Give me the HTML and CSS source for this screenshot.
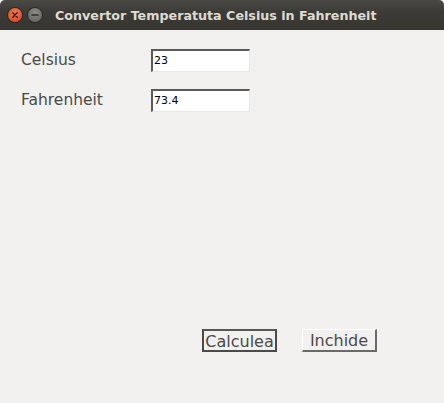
FILE: index.html
```html
<!DOCTYPE html>
<html>
<head>
<meta charset="utf-8">
<link rel="stylesheet" href="styles.css">
</head>
<body>
<div class="window">
  <div class="titlebar">
    <div class="controls">
      <span class="btn-close">
        <svg width="14" height="14" viewBox="0 0 14 14"><path d="M4.8 4.8 L9.2 9.2 M9.2 4.8 L4.8 9.2" stroke="#3a1a10" stroke-width="1.4" stroke-linecap="round"/></svg>
      </span>
      <span class="btn-min">
        <svg width="14" height="14" viewBox="0 0 14 14"><path d="M4 7 H10" stroke="#2c2c2a" stroke-width="1.5" stroke-linecap="round"/></svg>
      </span>
    </div>
    <div class="title">Convertor Temperatuta Celsius in Fahrenheit</div>
  </div>
  <div class="content">
    <div class="form">
      <div class="row">
        <label class="label">Celsius</label>
        <div class="field">23</div>
      </div>
      <div class="row">
        <label class="label">Fahrenheit</label>
        <div class="field">73.4</div>
      </div>
    </div>
    <div class="actions">
      <button class="button focused">Calculea</button>
      <button class="button">Inchide</button>
    </div>
  </div>
</div>
</body>
</html>
```
FILE: styles.css
```css
* { box-sizing: border-box; }
html, body { margin: 0; padding: 0; }
body {
  width: 444px;
  height: 403px;
  background: #f2f1f0;
  font-family: "DejaVu Sans", sans-serif;
  overflow: hidden;
}
.window {
  display: flex;
  flex-direction: column;
  height: 403px;
}
.titlebar {
  height: 30px;
  background: linear-gradient(#4a4944, #3c3b37 40%, #36352f);
  border-radius: 5px 5px 0 0;
  display: flex;
  align-items: center;
  padding-left: 8px;
}
.controls {
  display: flex;
  gap: 6px;
  align-items: center;
}
.btn-close, .btn-min {
  width: 14px;
  height: 14px;
  border-radius: 50%;
  display: flex;
}
.btn-close {
  background: radial-gradient(circle at 50% 35%, #f47a52, #e0502a 70%, #b8401e);
  box-shadow: 0 0 0 1px #2b2a26;
}
.btn-min {
  background: radial-gradient(circle at 50% 35%, #8d8b86, #6d6b66 70%, #55534f);
  box-shadow: 0 0 0 1px #2b2a26;
}
.title {
  margin-left: 13px;
  color: #dfdbd2;
  font-family: "DejaVu Sans", sans-serif;
  font-weight: bold;
  font-size: 12.7px;
  padding-top: 1px;
}
.content {
  flex: 1;
  display: flex;
  flex-direction: column;
  padding: 19px 0 0 21px;
}
.form {
  display: flex;
  flex-direction: column;
  gap: 17px;
}
.row {
  display: flex;
  align-items: center;
  height: 23px;
}
.label {
  width: 130px;
  font-size: 15.5px;
  color: #4a4a48;
  padding-bottom: 2px;
}
.field {
  width: 99px;
  height: 23px;
  background: #fff;
  border-top: 2px solid #5a5a58;
  border-left: 2px solid #5a5a58;
  border-right: 1px solid #e8e8e8;
  border-bottom: 1px solid #e8e8e8;
  font-size: 11px;
  color: #000;
  padding: 3px 0 0 1px;
}
.actions {
  display: flex;
  gap: 25px;
  margin-top: 217px;
  margin-left: 181px;
}
.button {
  width: 75px;
  height: 23px;
  padding: 0;
  background: #f2f1f0;
  font-family: "DejaVu Sans", sans-serif;
  font-size: 16px;
  color: #4a4a48;
  border-top: 1px solid #ffffff;
  border-left: 1px solid #ffffff;
  border-right: 2px solid #6a6a68;
  border-bottom: 2px solid #6a6a68;
  line-height: 22px;
  overflow: hidden;
  text-align: center;
}
.button.focused {
  border: 2px solid #4a4a48;
  border-top-color: #555;
}
```
